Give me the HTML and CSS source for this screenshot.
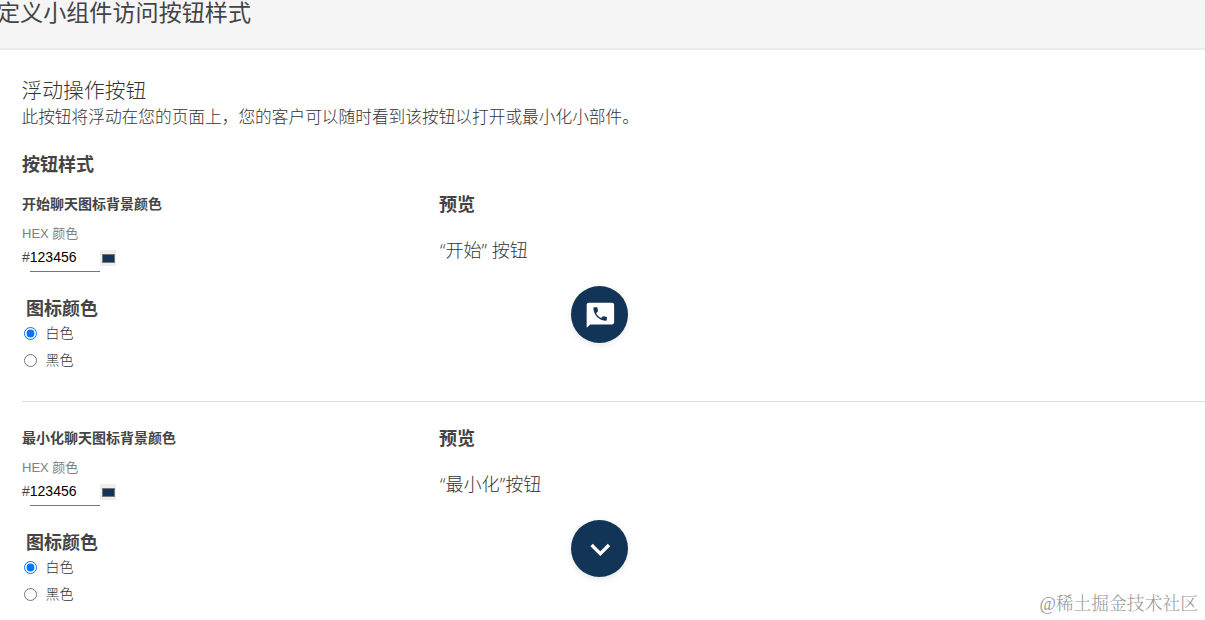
FILE: index.html
```html
<!DOCTYPE html>
<html lang="zh-CN">

<head>
	<meta charset="UTF-8">
	<meta name="viewport" content="width=device-width, initial-scale=1.0">
	<title>定义小组件访问按钮样式</title>
	<link rel="stylesheet" href="styles.css">
</head>

<body>
	<header class="page-header">
		<h1>定义小组件访问按钮样式</h1>
	</header>

	<main class="content">
		<h2>浮动操作按钮</h2>
		<p class="description">此按钮将浮动在您的页面上，您的客户可以随时看到该按钮以打开或最小化小部件。</p>
		<h3 class="style-title">按钮样式</h3>

		<section class="button-style">
			<div class="settings">
				<h4>开始聊天图标背景颜色</h4>
				<label class="hex-label" for="start-color">HEX 颜色</label>
				<div class="color-field">
					<span>#</span>
					<input class="hex-input" type="text" id="start-color" value="123456">
					<button class="swatch" type="button" aria-label="HEX 颜色"></button>
				</div>
				<h3 class="icon-title">图标颜色</h3>
				<label class="option"><input type="radio" name="start-icon" checked><span>白色</span></label>
				<label class="option"><input type="radio" name="start-icon"><span>黑色</span></label>
			</div>
			<div class="preview">
				<h3>预览</h3>
				<p>“开始” 按钮</p>
				<button class="fab" type="button" aria-label="开始">
					<svg width="32" height="32" viewBox="0 0 24 24">
						<path fill="#fff" d="M21 2.900H3.600c-.9 0-1.600.7-1.600 1.600v17.100l2.700-2.500H21c.9 0 1.600-.7 1.600-1.600v-13c0-.9-.7-1.600-1.600-1.600z" />
						<path transform="translate(5.400 4.600) scale(.56)" fill="#123456" d="M6.620 10.790c1.440 2.830 3.760 5.140 6.590 6.590l2.200-2.200c.27-.27.67-.36 1.020-.24 1.120.37 2.330.57 3.570.57.55 0 1 .45 1 1V20c0 .55-.45 1-1 1-9.390 0-17-7.610-17-17 0-.55.45-1 1-1h3.500c.55 0 1 .45 1 1 0 1.250.2 2.450.57 3.570.11.35.03.74-.25 1.020l-2.200 2.200z" />
					</svg>
				</button>
			</div>
		</section>

		<section class="button-style">
			<div class="settings">
				<h4>最小化聊天图标背景颜色</h4>
				<label class="hex-label" for="minimize-color">HEX 颜色</label>
				<div class="color-field">
					<span>#</span>
					<input class="hex-input" type="text" id="minimize-color" value="123456">
					<button class="swatch" type="button" aria-label="HEX 颜色"></button>
				</div>
				<h3 class="icon-title">图标颜色</h3>
				<label class="option"><input type="radio" name="minimize-icon" checked><span>白色</span></label>
				<label class="option"><input type="radio" name="minimize-icon"><span>黑色</span></label>
			</div>
			<div class="preview">
				<h3>预览</h3>
				<p>“最小化”按钮</p>
				<button class="fab" type="button" aria-label="最小化">
					<svg width="32" height="32" viewBox="0 0 32 32">
						<path fill="none" stroke="#fff" stroke-width="3.300" d="M7.600 12l8.700 8.700 8.700-8.700" />
					</svg>
				</button>
			</div>
		</section>
	</main>

	<div class="watermark">@稀土掘金技术社区</div>
</body>

</html>
```

FILE: styles.css
```css
* {
	margin: 0;
	padding: 0;
	box-sizing: border-box;
}

body {
	height: 620px;
	overflow: hidden;
	background: #fff;
	color: #444;
	font-family: "Open Sans", "Noto Sans CJK SC", sans-serif;
}

.page-header {
	height: 50px;
	background: #f5f5f5;
	border-bottom: 2px solid #ebebeb;
}

h1 {
	margin-left: -3px;
	font-size: 23.1px;
	line-height: 25px;
	font-weight: 400;
	white-space: nowrap;
}

.content {
	padding: 27px 0 0 22px;
}

h2 {
	margin-left: -0.5px;
	color: #333;
	font-size: 20.8px;
	line-height: 27px;
	font-weight: 300;
}

.description {
	margin-left: -0.5px;
	color: #333;
	font-size: 16.7px;
	line-height: 25px;
	font-weight: 300;
}

h3 {
	font-size: 18px;
	line-height: 24px;
	font-weight: bold;
}

.style-title {
	margin-top: 23px;
}

.button-style {
	display: grid;
	grid-template-columns: 417px 1fr;
	height: 234px;
	padding-top: 24px;
	border-bottom: 1px solid #dcdcdc;
}

/* the first block sits closer to its title */
.style-title + .button-style {
	height: 226px;
	padding-top: 16px;
}

.button-style:last-child {
	border-bottom: none;
}

h4 {
	font-size: 14px;
	line-height: 24px;
}

.hex-label {
	display: block;
	margin-top: 9px;
	color: #808080;
	font-family: "Liberation Sans", "Noto Sans CJK SC", sans-serif;
	font-size: 13px;
	line-height: 18px;
	font-weight: 400;
}

.color-field {
	display: flex;
	height: 29px;
	font-family: "Liberation Sans", sans-serif;
	font-size: 14px;
	line-height: 29px;
}

.hex-input {
	width: 70px;
	border: none;
	border-bottom: 1px solid #777;
	font: inherit;
	color: #000;
}

.swatch {
	width: 16px;
	height: 16px;
	margin-top: 7px;
	border: 4px solid #efefef;
	border-width: 4px 1px 3px 2px;
	background: #123456;
	box-shadow: inset 0 0 0 1px #777;
}

.icon-title {
	margin: 24px 0 0 4px;
}

.option {
	display: flex;
	align-items: center;
	height: 27px;
	color: #333;
	font-size: 14px;
	font-weight: 300;
}

.option input {
	width: 13px;
	height: 13px;
	margin: 0 8.5px 0 2px;
}

.option span {
	padding-bottom: 3px;
}

.preview p {
	margin: 22px 0 0 1px;
	color: #333;
	font-size: 18.1px;
	line-height: 24px;
	font-weight: 300;
}

.fab {
	display: flex;
	align-items: center;
	justify-content: center;
	width: 57px;
	height: 57px;
	margin: 24px 0 0 132px;
	border: none;
	border-radius: 50%;
	background: #123456;
	box-shadow: 0 2px 6px rgba(0, 0, 0, 0.1);
}

.watermark {
	position: absolute;
	right: 7px;
	bottom: 4px;
	color: #999;
	font-family: "Liberation Serif", "Noto Serif CJK SC", "Noto Sans CJK SC", serif;
	font-size: 17.8px;
	line-height: 24px;
	font-weight: 300;
}
```
